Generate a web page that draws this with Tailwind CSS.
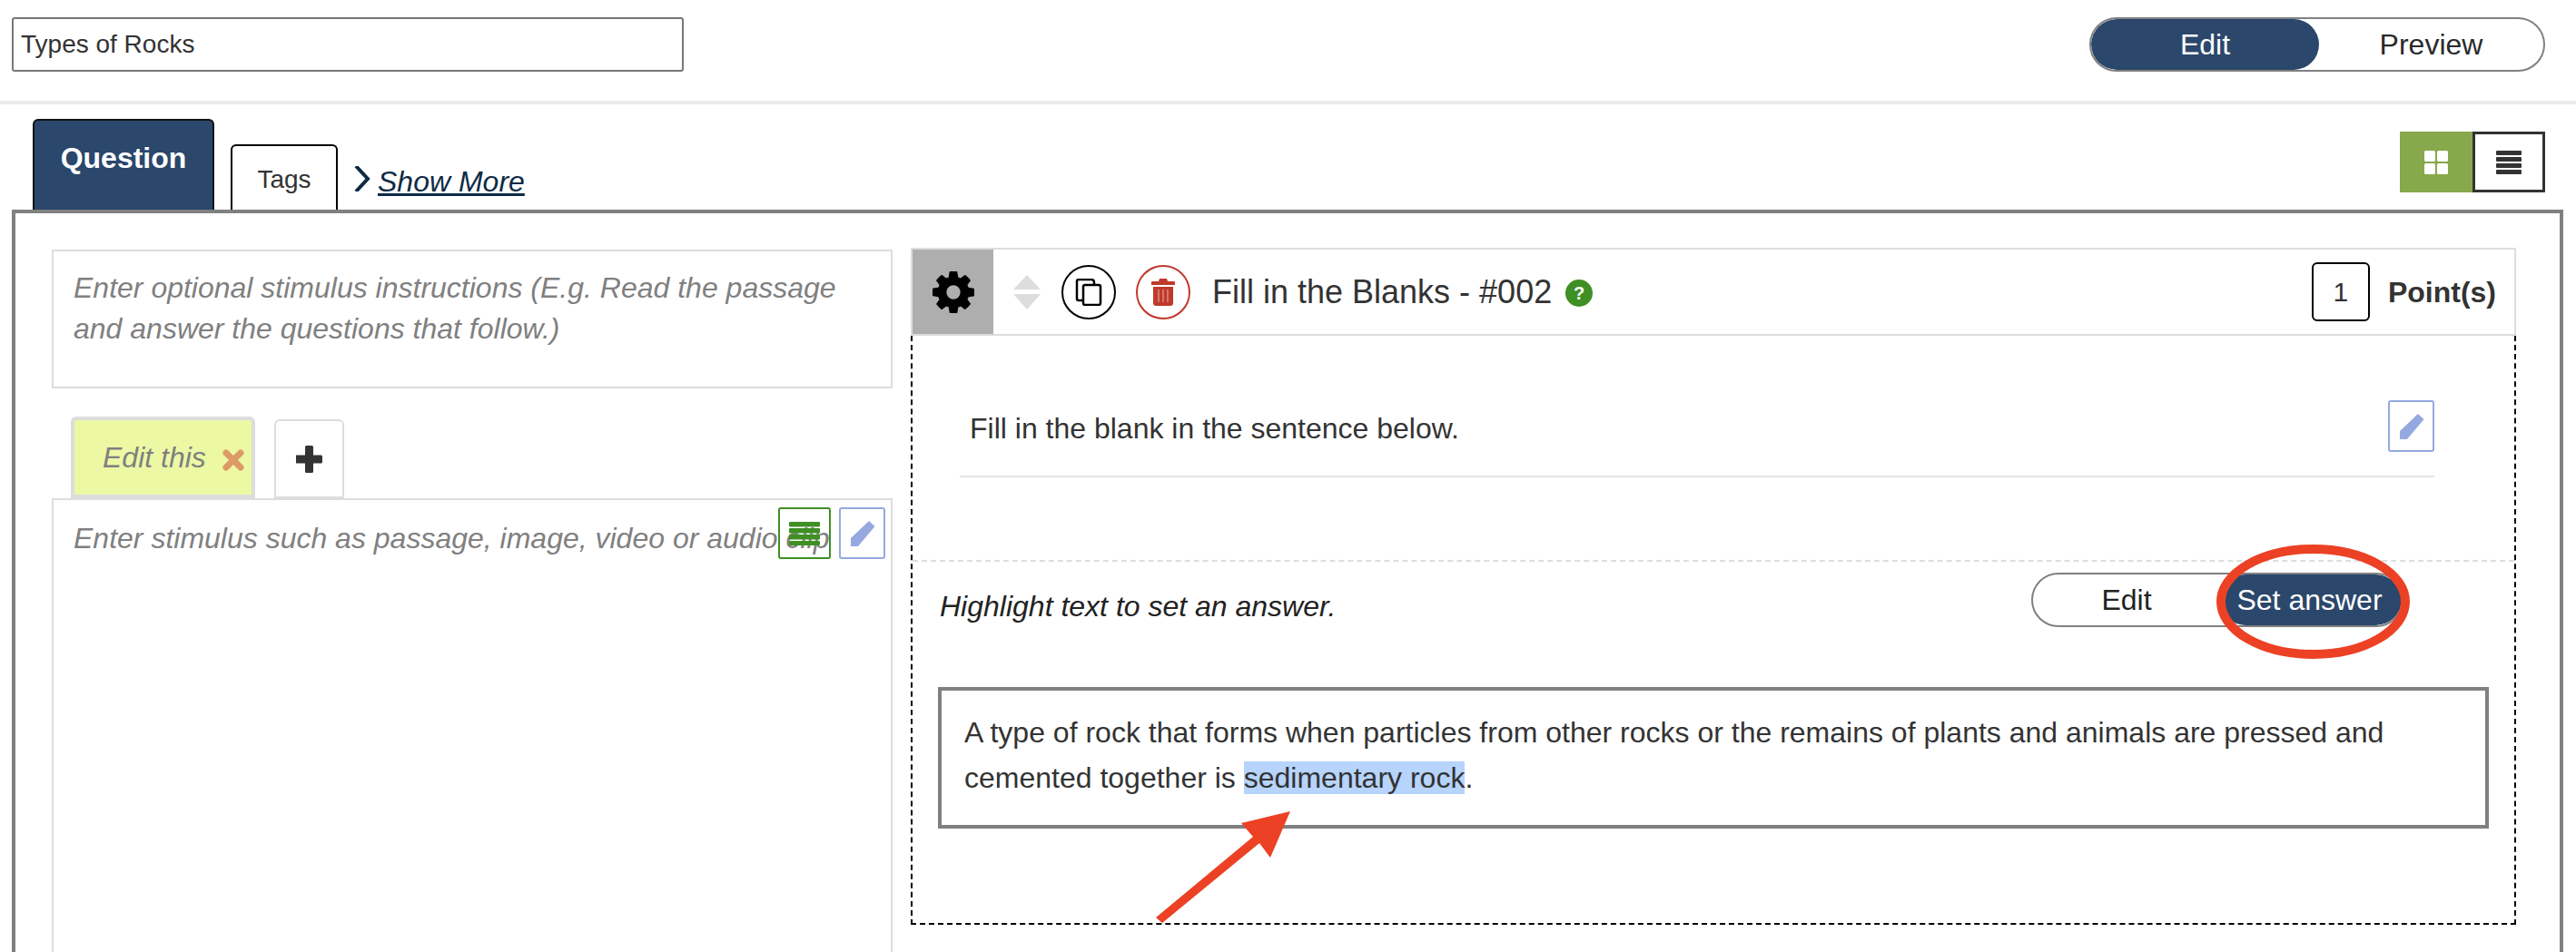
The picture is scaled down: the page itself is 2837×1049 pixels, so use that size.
<!DOCTYPE html>
<html>
<head>
<meta charset="utf-8">
<script src="https://cdn.jsdelivr.net/npm/@tailwindcss/browser@4"></script>
</head>
<body class="bg-white">
<div class="relative w-[2837px] h-[1049px] overflow-hidden bg-white text-[#333] font-['Liberation_Sans',Arial,sans-serif]">

  <!-- top bar -->
  <header class="h-[115px] flex justify-between items-start pt-[19px] pl-[13px] pr-[34px] border-b-4 border-[#ebebeb]">
    <div class="w-[740px] h-[60px] border-2 border-[#777] rounded-[3px] flex items-center pl-[8px] text-[28px] text-[#333]">Types of Rocks</div>
    <div class="w-[502px] h-[60px] border-2 border-[#808080] rounded-full flex text-[32px] overflow-hidden">
      <div class="w-[251px] bg-[#2b476b] text-white rounded-full flex items-center justify-center">Edit</div>
      <div class="flex-1 flex items-center justify-center text-[#2b2b2b]">Preview</div>
    </div>
  </header>

  <!-- tabs row -->
  <div class="h-[116px] flex justify-between pl-[36px] pr-[34px]">
    <div class="flex items-end">
      <div class="w-[200px] h-[100px] bg-[#2b476b] border-2 border-b-0 border-[#111] rounded-t-[6px] text-white font-bold text-[32px] flex justify-center pt-[17px]">Question</div>
      <div class="ml-[18px] w-[118px] h-[72px] border-2 border-b-0 border-black rounded-t-[6px] text-[28px] flex justify-center items-center pt-[4px] text-[#333]">Tags</div>
      <svg class="ml-[18px] mb-[20px]" width="18" height="28" viewBox="0 0 18 28" fill="none" stroke="#0d2b45" stroke-width="4"><path d="M2 0 L15 14 L2 28"/></svg>
      <a class="ml-[8px] mb-[11px] text-[32px] italic underline text-[#0d2b45] leading-[40px]">Show More</a>
    </div>
    <div class="flex mt-[30px] h-[67px]">
      <div class="w-[80px] bg-[#87a84b] flex items-center justify-center">
        <svg width="26" height="26" viewBox="0 0 26 26" fill="#fff"><rect width="12" height="12" rx="1.500"/><rect x="14" width="12" height="12" rx="1.500"/><rect y="14" width="12" height="12" rx="1.500"/><rect x="14" y="14" width="12" height="12" rx="1.500"/></svg>
      </div>
      <div class="w-[80px] border-[3px] border-[#333] flex items-center justify-center">
        <svg width="28" height="26" viewBox="0 0 28 26" fill="#333"><rect width="28" height="5" rx="1"/><rect y="7" width="28" height="5" rx="1"/><rect y="14" width="28" height="5" rx="1"/><rect y="21" width="28" height="5" rx="1"/></svg>
      </div>
    </div>
  </div>

  <!-- main panel -->
  <main class="ml-[13px] w-[2810px] h-[900px] border-4 border-[#808080] flex pt-[38px] pl-[40px]">
    <!-- left column -->
    <section class="w-[926px] shrink-0 flex flex-col">
      <div class="h-[153px] mt-[2px] border-2 border-[#ddd] pl-[22px] pt-[18px] text-[32px] leading-[45px] italic text-[#808080]">Enter optional stimulus instructions (E.g. Read the passage<br>and answer the questions that follow.)</div>
      <div class="flex items-end pl-[21px] mt-[30px] h-[91px]">
        <div class="relative w-[203px] h-[90px] bg-[#ecf8a4] border-[4px] border-[#ddd] rounded-t-[6px] pl-[31px] pt-[17px] text-[32px] italic text-[#808080]">Edit this
          <svg class="absolute left-[163px] top-[32px]" width="24" height="24" viewBox="0 0 24 24" fill="none" stroke="#dc9a66" stroke-width="7" stroke-linecap="round"><path d="M4 4 L20 20 M20 4 L4 20"/></svg>
        </div>
        <div class="ml-[21px] w-[77px] h-[87px] border-2 border-[#ddd] rounded-t-[6px] flex items-center justify-center">
          <svg width="30" height="30" viewBox="0 0 30 30" fill="#333"><rect x="10" width="9" height="30" rx="1.500"/><rect x="-1" y="10.500" width="30" height="9" rx="1.500"/></svg>
        </div>
      </div>
      <div class="relative flex-1 border-2 border-[#ddd] pl-[22px] pt-[20px] text-[32px] leading-[45px] italic text-[#808080] whitespace-nowrap">Enter stimulus such as passage, image, video or audio clip
        <div class="absolute left-[798px] top-[8px] w-[58px] h-[57px] border-2 border-[#3f8f24] rounded-[3px] flex items-center justify-center">
          <svg width="34" height="26" viewBox="0 0 34 26" fill="#3f8f24"><rect width="34" height="5.500" rx="1"/><rect y="7" width="34" height="5.500" rx="1"/><rect y="14" width="34" height="5.500" rx="1"/><rect y="21" width="34" height="5" rx="1"/></svg>
        </div>
        <div class="absolute left-[865px] top-[8px] w-[51px] h-[57px] border-2 border-[#95a9e0] rounded-[3px] flex items-center justify-center">
          <svg width="28" height="30" viewBox="0 0 28 30" fill="#95a9e0"><path d="M21 1 L27.500 7 L9 29 L1 29 L1 20 Z"/></svg>
        </div>
      </div>
    </section>

    <!-- right column -->
    <section class="ml-[20px] w-[1768px] shrink-0 h-[746px] flex flex-col">
      <div class="h-[97px] border-2 border-[#ddd] flex items-center shrink-0">
        <div class="w-[89px] h-full bg-[#aeaeae] flex items-center justify-center shrink-0">
          <svg width="46" height="46" viewBox="0 0 1536 1536" fill="#000"><path d="M1024 768q0-106-75-181t-181-75-181 75-75 181 75 181 181 75 181-75 75-181zm512-109v222q0 12-8 23t-20 13l-185 28q-19 54-39 91 35 50 107 138 10 12 10 25t-9 23q-27 37-99 108t-94 71q-12 0-26-9l-138-108q-44 23-91 38-16 136-29 186-7 28-36 28h-222q-14 0-24.500-8.500t-11.500-21.500l-28-184q-49-16-90-37l-141 107q-10 9-25 9-14 0-25-11-126-114-165-168-7-10-7-23 0-12 8-23 15-21 51-66.500t54-70.500q-27-50-41-99l-183-27q-13-2-21-12.500t-8-23.500v-222q0-12 8-23t19-13l186-28q14-46 39-92-40-57-107-138-10-12-10-24 0-10 9-23 26-36 98.500-107.500t94.500-71.500q13 0 26 10l138 107q44-23 91-38 16-136 29-186 7-28 36-28h222q14 0 24.500 8.500t11.500 21.500l28 184q49 16 90 37l142-107q9-9 24-9 13 0 25 10 129 119 165 170 7 8 7 22 0 12-8 23-15 21-51 66.500t-54 70.500q26 50 41 98l183 28q13 2 21 12.500t8 23.500z"/></svg>
        </div>
        <svg class="ml-[22px] shrink-0" width="30" height="38" viewBox="0 0 30 38" fill="#ddd"><path d="M15 0 L30 16 L0 16 Z M0 21 L30 21 L15 38 Z"/></svg>
        <div class="ml-[23px] w-[60px] h-[60px] shrink-0 rounded-full border-2 border-black flex items-center justify-center">
          <svg width="30" height="30" viewBox="0 0 30 30" fill="none" stroke="#000" stroke-width="2.500"><rect x="9" y="7" width="19" height="22" rx="2"/><path d="M9 24 H4 Q2 24 2 22 V3 Q2 1 4 1 H18 Q21 1 21 4 V7"/></svg>
        </div>
        <div class="ml-[22px] w-[60px] h-[60px] shrink-0 rounded-full border-2 border-[#c0392b] flex items-center justify-center">
          <svg width="26" height="30" viewBox="0 0 26 30" fill="#c0392b"><path d="M9 0 H17 L18 3 H25 Q26 3 26 4 V7 H0 V4 Q0 3 1 3 H8 Z"/><path d="M2 9 H24 V27 Q24 30 21 30 H5 Q2 30 2 27 Z"/><path d="M8 12 V26 M13 12 V26 M18 12 V26" stroke="#e9b3ac" stroke-width="1"/></svg>
        </div>
        <span class="ml-[24px] text-[36px] text-[#333] whitespace-nowrap">Fill in the Blanks - #002</span>
        <div class="ml-[15px] mt-[2px] w-[30px] h-[30px] shrink-0 rounded-full bg-[#3f8f24] text-white font-bold text-[20px] flex items-center justify-center">?</div>
        <div class="ml-auto w-[64px] h-[65px] shrink-0 border-2 border-black rounded-[6px] flex items-center justify-center text-[30px]">1</div>
        <span class="ml-[20px] mr-[20px] font-bold text-[32px] text-[#333] whitespace-nowrap">Point(s)</span>
      </div>
      <div class="flex-1 border-2 border-t-0 border-dashed border-black flex flex-col">
        <div class="relative h-[156px] ml-[52px] mr-[88px] border-b-2 border-[#e5e5e5] pl-[11px] pt-[84px] text-[32px] leading-[36px] text-[#333] shrink-0">Fill in the blank in the sentence below.
          <div class="absolute right-0 top-[71px] w-[51px] h-[57px] border-2 border-[#95a9e0] rounded-[3px] flex items-center justify-center">
            <svg width="28" height="30" viewBox="0 0 28 30" fill="#95a9e0"><path d="M21 1 L27.500 7 L9 29 L1 29 L1 20 Z"/></svg>
          </div>
        </div>
        <div class="mt-[91px] border-t-2 border-dashed border-[#ddd] h-[140px] flex items-start pl-[30px] pr-[122px] justify-between shrink-0">
          <div class="mt-[27px] text-[32px] italic text-[#222] leading-[44px]">Highlight text to set an answer.</div>
          <div class="mt-[12px] w-[410px] h-[60px] border-2 border-[#808080] rounded-full flex text-[32px] overflow-hidden">
            <div class="w-[206px] flex items-center justify-center text-[#222]">Edit</div>
            <div class="flex-1 bg-[#2b476b] text-white rounded-full flex items-center justify-center pr-[3px]">Set answer</div>
          </div>
        </div>
        <div class="ml-[28px] w-[1708px] h-[156px] border-4 border-[#808080] pl-[25px] pt-[21px] text-[32px] leading-[50px] text-[#333] shrink-0">A type of rock that forms when particles from other rocks or the remains of plants and animals are pressed and<br>cemented together is <span class="bg-[#b6d4fc]">sedimentary rock</span>.</div>
      </div>
    </section>
  </main>

  <!-- red annotations -->
  <svg class="absolute left-0 top-0 pointer-events-none" width="2837" height="1049" fill="none">
    <ellipse cx="2547.500" cy="663" rx="101.500" ry="58" stroke="#ec4124" stroke-width="10"/>
    <path d="M1421 894 L1367 907 L1380 922 L1273 1011 L1280 1017 L1387 929 L1399 945 Z" fill="#ec4124"/>
  </svg>
</div>
</body>
</html>
